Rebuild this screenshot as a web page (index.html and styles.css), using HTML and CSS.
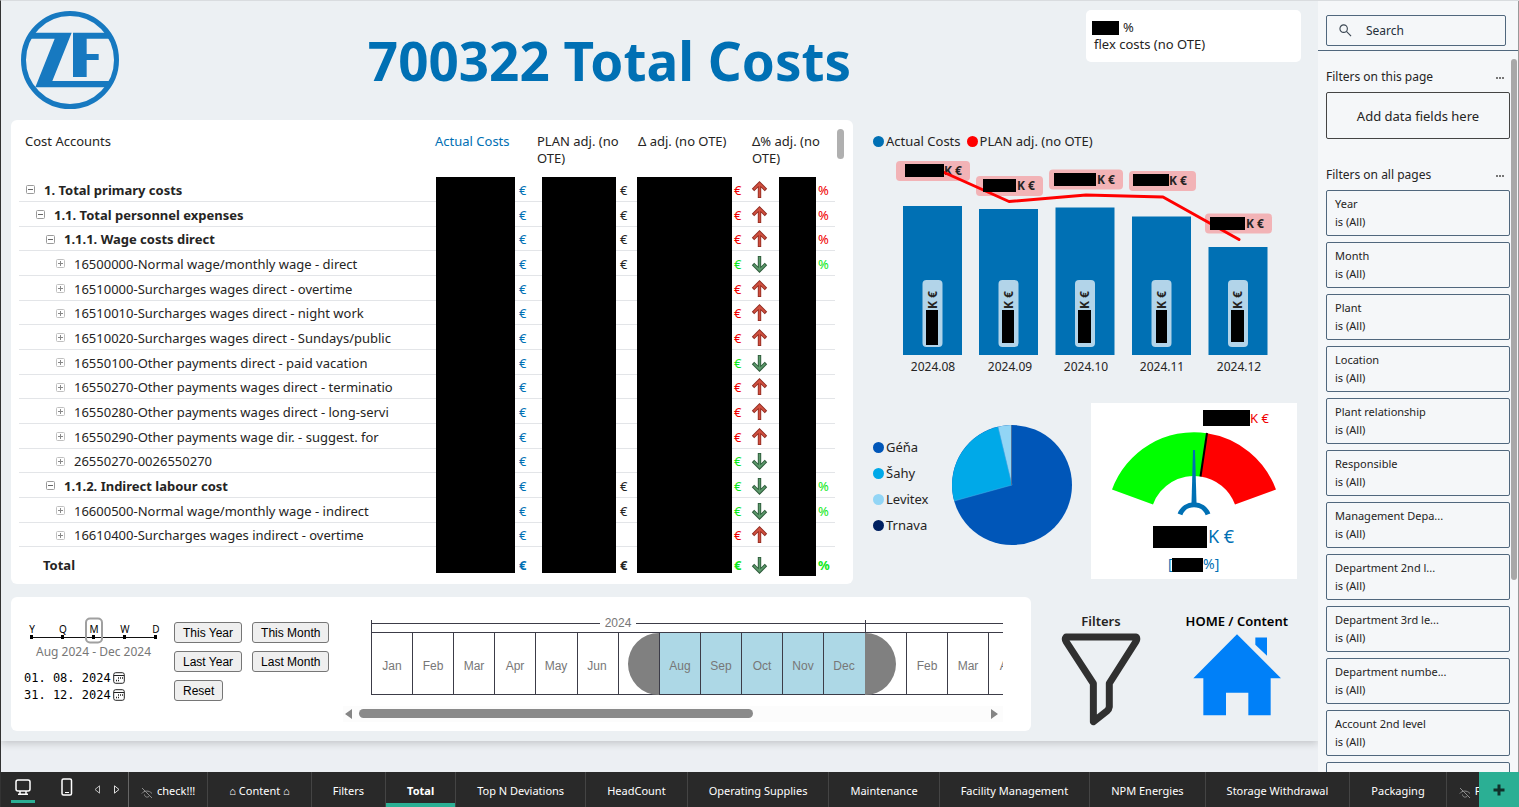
FILE: index.html
```html
<!DOCTYPE html>
<html lang="en">
<head>
<meta charset="utf-8">
<title>700322 Total Costs</title>
<link rel="stylesheet" href="styles.css">
</head>
<body>
<svg class="defs" aria-hidden="true">
  <symbol id="up" viewBox="0 0 16 18"><path d="M8 17V4M1.500 9L8 2.500L14.500 9" fill="none" stroke="#8f2a20" stroke-width="3.400"/><path d="M8 16.300V3.500M2.200 8.400L8 2.600l5.800 5.800" fill="none" stroke="#d0503f" stroke-width="1.800"/></symbol>
  <symbol id="down" viewBox="0 0 16 18"><path d="M8 1v13M1.500 9L8 15.500L14.500 9" fill="none" stroke="#2d5a3a" stroke-width="3.400"/><path d="M8 1.700V14.500M2.200 9.600L8 15.400l5.800-5.800" fill="none" stroke="#5c9a6b" stroke-width="1.600"/></symbol>
  <symbol id="minus" viewBox="0 0 9 9"><rect x="0.500" y="0.500" width="8" height="8" rx="1" fill="none" stroke="#9a9a9a"/><path d="M2 4.500h5" stroke="#666"/></symbol>
  <symbol id="plus" viewBox="0 0 9 9"><rect x="0.500" y="0.500" width="8" height="8" rx="1" fill="none" stroke="#c0c0c0"/><path d="M2 4.500h5M4.500 2v5" stroke="#888"/></symbol>
  <symbol id="cal" viewBox="0 0 12 12"><rect x="0.700" y="0.700" width="10.600" height="10.600" rx="2" fill="none" stroke="#222"/><path d="M1 3.500h10" stroke="#222"/><path d="M5 6h1M7 6h1M9 6h1M3 8.500h1M5 8.500h1" stroke="#222" stroke-width="1.300"/></symbol>
  <symbol id="hidden" viewBox="0 0 12 12"><path d="M1 1l10 10M.8 6.500C3 3.500 8 3 11 6.500M3.500 7.500c0 3 4 3.500 5 1" fill="none" stroke="#8d8d8d"/></symbol>
</svg>
<div class="app">
  <div class="workspace">
    <main class="stage">
      <div class="canvas">
        <header class="head">
          <svg class="logo" viewBox="0 0 294 294" role="img" aria-label="ZF">
            <circle cx="147" cy="147" r="139.500" fill="none" stroke="#1779c0" stroke-width="15"/>
            <path fill="#1779c0" d="M38 65H152L94 210H270L256 229H43L101 83H26ZM156 65H254L268 83H197V129H233V147H197V198H156Z"/>
          </svg>
          <h1>700322 Total Costs</h1>
          <div class="kpi">
            <div class="kpi-value"><span class="mask kpi-mask"></span>%</div>
            <div class="kpi-label">flex costs (no OTE)</div>
          </div>
        </header>

        <div class="middle">
          <section class="card table-card">
            <table class="costs">
              <colgroup><col><col class="c1"><col class="c2"><col class="c3"><col class="c4"></colgroup>
              <thead><tr><th>Cost Accounts</th><th class="blue">Actual Costs</th><th>PLAN adj. (no OTE)</th><th>Δ adj. (no OTE)</th><th>Δ% adj. (no OTE)</th></tr></thead>
              <tbody>
                <tr class="strong"><th><div class="n"><svg><use href="#minus"/></svg>1. Total primary costs</div></th><td><div class="v a"><i class="mask"></i>€</div></td><td><div class="v p"><i class="mask"></i>€</div></td><td><div class="v d red"><i class="mask"></i>€</div></td><td><div class="v r red"><svg><use href="#up"/></svg><i class="mask"></i>%</div></td></tr>
                <tr class="strong"><th><div class="n l2"><svg><use href="#minus"/></svg>1.1. Total personnel expenses</div></th><td><div class="v a"><i class="mask"></i>€</div></td><td><div class="v p"><i class="mask"></i>€</div></td><td><div class="v d red"><i class="mask"></i>€</div></td><td><div class="v r red"><svg><use href="#up"/></svg><i class="mask"></i>%</div></td></tr>
                <tr class="strong"><th><div class="n l3"><svg><use href="#minus"/></svg>1.1.1. Wage costs direct</div></th><td><div class="v a"><i class="mask"></i>€</div></td><td><div class="v p"><i class="mask"></i>€</div></td><td><div class="v d red"><i class="mask"></i>€</div></td><td><div class="v r red"><svg><use href="#up"/></svg><i class="mask"></i>%</div></td></tr>
                <tr><th><div class="n l4"><svg><use href="#plus"/></svg>16500000-Normal wage/monthly wage - direct</div></th><td><div class="v a"><i class="mask"></i>€</div></td><td><div class="v p"><i class="mask"></i>€</div></td><td><div class="v d green"><i class="mask"></i>€</div></td><td><div class="v r green"><svg><use href="#down"/></svg><i class="mask"></i>%</div></td></tr>
                <tr><th><div class="n l4"><svg><use href="#plus"/></svg>16510000-Surcharges wages direct - overtime</div></th><td><div class="v a"><i class="mask"></i>€</div></td><td><div class="v p"><i class="mask"></i></div></td><td><div class="v d red"><i class="mask"></i>€</div></td><td><div class="v r"><svg><use href="#up"/></svg><i class="mask"></i></div></td></tr>
                <tr><th><div class="n l4"><svg><use href="#plus"/></svg>16510010-Surcharges wages direct - night work</div></th><td><div class="v a"><i class="mask"></i>€</div></td><td><div class="v p"><i class="mask"></i></div></td><td><div class="v d red"><i class="mask"></i>€</div></td><td><div class="v r"><svg><use href="#up"/></svg><i class="mask"></i></div></td></tr>
                <tr><th><div class="n l4"><svg><use href="#plus"/></svg>16510020-Surcharges wages direct - Sundays/public</div></th><td><div class="v a"><i class="mask"></i>€</div></td><td><div class="v p"><i class="mask"></i></div></td><td><div class="v d red"><i class="mask"></i>€</div></td><td><div class="v r"><svg><use href="#up"/></svg><i class="mask"></i></div></td></tr>
                <tr><th><div class="n l4"><svg><use href="#plus"/></svg>16550100-Other payments direct - paid vacation</div></th><td><div class="v a"><i class="mask"></i>€</div></td><td><div class="v p"><i class="mask"></i></div></td><td><div class="v d green"><i class="mask"></i>€</div></td><td><div class="v r"><svg><use href="#down"/></svg><i class="mask"></i></div></td></tr>
                <tr><th><div class="n l4"><svg><use href="#plus"/></svg>16550270-Other payments wages direct - terminatio</div></th><td><div class="v a"><i class="mask"></i>€</div></td><td><div class="v p"><i class="mask"></i></div></td><td><div class="v d red"><i class="mask"></i>€</div></td><td><div class="v r"><svg><use href="#up"/></svg><i class="mask"></i></div></td></tr>
                <tr><th><div class="n l4"><svg><use href="#plus"/></svg>16550280-Other payments wages direct - long-servi</div></th><td><div class="v a"><i class="mask"></i>€</div></td><td><div class="v p"><i class="mask"></i></div></td><td><div class="v d red"><i class="mask"></i>€</div></td><td><div class="v r"><svg><use href="#up"/></svg><i class="mask"></i></div></td></tr>
                <tr><th><div class="n l4"><svg><use href="#plus"/></svg>16550290-Other payments wage dir. - suggest. for</div></th><td><div class="v a"><i class="mask"></i>€</div></td><td><div class="v p"><i class="mask"></i></div></td><td><div class="v d red"><i class="mask"></i>€</div></td><td><div class="v r"><svg><use href="#up"/></svg><i class="mask"></i></div></td></tr>
                <tr><th><div class="n l4"><svg><use href="#plus"/></svg>26550270-0026550270</div></th><td><div class="v a"><i class="mask"></i>€</div></td><td><div class="v p"><i class="mask"></i></div></td><td><div class="v d green"><i class="mask"></i>€</div></td><td><div class="v r"><svg><use href="#down"/></svg><i class="mask"></i></div></td></tr>
                <tr class="strong"><th><div class="n l3"><svg><use href="#minus"/></svg>1.1.2. Indirect labour cost</div></th><td><div class="v a"><i class="mask"></i>€</div></td><td><div class="v p"><i class="mask"></i>€</div></td><td><div class="v d green"><i class="mask"></i>€</div></td><td><div class="v r green"><svg><use href="#down"/></svg><i class="mask"></i>%</div></td></tr>
                <tr><th><div class="n l4"><svg><use href="#plus"/></svg>16600500-Normal wage/monthly wage - indirect</div></th><td><div class="v a"><i class="mask"></i>€</div></td><td><div class="v p"><i class="mask"></i>€</div></td><td><div class="v d green"><i class="mask"></i>€</div></td><td><div class="v r green"><svg><use href="#down"/></svg><i class="mask"></i>%</div></td></tr>
                <tr><th><div class="n l4"><svg><use href="#plus"/></svg>16610400-Surcharges wages indirect - overtime</div></th><td><div class="v a"><i class="mask"></i>€</div></td><td><div class="v p"><i class="mask"></i></div></td><td><div class="v d red"><i class="mask"></i>€</div></td><td><div class="v r"><svg><use href="#up"/></svg><i class="mask"></i></div></td></tr>
              </tbody>
              <tfoot>
                <tr><th><div class="n total">Total</div></th><td><div class="v a"><i class="mask"></i>€</div></td><td><div class="v p"><i class="mask"></i>€</div></td><td><div class="v d green"><i class="mask"></i>€</div></td><td><div class="v r green"><svg><use href="#down"/></svg><i class="mask"></i>%</div></td></tr>
              </tfoot>
            </table>
            <div class="vthumb"></div>
          </section>

          <section class="charts">
            <ul class="legend">
              <li><i class="dot blue-dot"></i>Actual Costs</li>
              <li><i class="dot red-dot"></i>PLAN adj. (no OTE)</li>
            </ul>
            <svg class="combo" viewBox="870 155 431 225" role="img" aria-label="Actual costs and plan by month">
              <g fill="#0070b4">
                <rect x="903" y="206" width="59" height="149"/><rect x="979" y="209" width="59" height="146"/><rect x="1055.500" y="207.500" width="59" height="147.500"/><rect x="1132" y="216.500" width="59" height="138.500"/><rect x="1208.500" y="247" width="59" height="108"/>
              </g>
              <g fill="#b2d4e9">
                <rect x="922.500" y="280" width="20" height="67" rx="4"/><rect x="998.500" y="280" width="20" height="67" rx="4"/><rect x="1075" y="280" width="20" height="67" rx="4"/><rect x="1151.500" y="280" width="20" height="67" rx="4"/><rect x="1228" y="280" width="20" height="67" rx="4"/>
              </g>
              <g class="val">
                <text transform="translate(937 309) rotate(-90)">K €</text><text transform="translate(1013 309) rotate(-90)">K €</text><text transform="translate(1089 309) rotate(-90)">K €</text><text transform="translate(1166 309) rotate(-90)">K €</text><text transform="translate(1242 309) rotate(-90)">K €</text>
              </g>
              <g fill="#f2b3b6">
                <rect x="896" y="161" width="74" height="20" rx="4"/><rect x="976" y="176" width="67" height="20" rx="4"/><rect x="1049" y="169.500" width="74" height="20" rx="4"/><rect x="1129" y="171" width="67" height="20" rx="4"/><rect x="1205" y="213.500" width="67" height="20" rx="4"/>
              </g>
              <g class="val">
                <text x="944" y="175">K €</text><text x="1017" y="190">K €</text><text x="1097" y="184">K €</text><text x="1169" y="185">K €</text><text x="1246" y="228">K €</text>
              </g>
              <path d="M932 167L1009 201.500L1086 195L1163 197L1239 239.500" fill="none" stroke="#ff0000" stroke-width="3" stroke-linejoin="round" stroke-linecap="round"/>
              <g fill="#000">
                <rect x="905" y="164" width="39" height="13"/><rect x="983" y="179" width="33" height="13"/><rect x="1054" y="173" width="42" height="13"/><rect x="1133" y="174" width="36" height="12"/><rect x="1210" y="217" width="35" height="13"/>
                <rect x="926" y="310" width="12" height="35"/><rect x="1002" y="310" width="12" height="33"/><rect x="1078" y="310" width="13" height="33"/><rect x="1156" y="310" width="11" height="33"/><rect x="1231" y="310" width="13" height="32"/>
              </g>
              <g class="axis">
                <text x="933" y="371">2024.08</text><text x="1010" y="371">2024.09</text><text x="1086" y="371">2024.10</text><text x="1162" y="371">2024.11</text><text x="1239" y="371">2024.12</text>
              </g>
            </svg>
            <div class="lower">
              <ul class="sites">
                <li><i class="dot s1"></i>Géňa</li>
                <li><i class="dot s2"></i>Šahy</li>
                <li><i class="dot s3"></i>Levitex</li>
                <li><i class="dot s4"></i>Trnava</li>
              </ul>
              <svg class="pie" viewBox="-61 -61 122 122" role="img" aria-label="Share by site">
                <circle r="60" fill="#0056b8"/>
                <path d="M0 0L-57.800 16A60 60 0 0 1-14 -58.300Z" fill="#00a9e8"/>
                <path d="M0 0L-14 -58.300A60 60 0 0 1-0.800 -60Z" fill="#92d5f5"/>
                <path d="M0 0L-57.800 16M0 0L-14 -58.300" stroke="#4cb0e8" stroke-width="0.500"/>
                <path d="M-0.500 0V-60" stroke="#4d6f9b" stroke-width="1"/>
              </svg>
              <div class="gauge-card">
                <svg viewBox="1091 403 206 176" role="img" aria-label="Cost gauge">
                  <path d="M1112 489.600A87.300 87.300 0 0 1 1207 433.200L1200.500 476.400A43.600 43.600 0 0 0 1153 504.500Z" fill="#00ff00"/>
                  <path d="M1276 489.600A87.300 87.300 0 0 0 1207 433.200L1200.500 476.400A43.600 43.600 0 0 1 1235 504.500Z" fill="#ff0000"/>
                  <path d="M1207 433L1200.500 476.500" stroke="#000" stroke-width="2"/>
                  <path d="M1193 450h2l1.500 53h-5z" fill="#0070b4"/>
                  <path d="M1180 514.300A15 15 0 0 1 1208 514.300" fill="none" stroke="#0070b4" stroke-width="5"/>
                  <rect x="1203" y="410" width="47" height="16"/><rect x="1153" y="526" width="54" height="22"/><rect x="1172" y="558" width="31" height="14"/>
                  <text x="1250" y="423" class="g-target">K €</text>
                  <text x="1208" y="543" class="g-main">K €</text>
                  <text x="1168" y="569" class="g-pct">[</text><text x="1203" y="569" class="g-pct">%]</text>
                </svg>
              </div>
            </div>
          </section>
        </div>

        <div class="bottom">
          <section class="card timeline">
            <div class="range">
              <svg class="gran" viewBox="24 616 140 28" role="img" aria-label="Granularity">
                <path d="M31 637.500H156" stroke="#111"/>
                <path d="M30 635h3v4h-3zM61 635h3v4h-3zM92 635h3v4h-3zM123 635h3v4h-3zM154 635h3v4h-3z"/>
                <rect x="86" y="618.500" width="16" height="24" rx="4" fill="none" stroke="#a0a0a0" stroke-width="2"/>
                <text x="32" y="633">Y</text><text x="63" y="633">Q</text><text x="94" y="633">M</text><text x="125" y="633">W</text><text x="156" y="633">D</text>
              </svg>
              <div class="range-text">Aug 2024 - Dec 2024</div>
              <label class="date"><input type="text" value="01. 08. 2024" aria-label="Start date"><svg><use href="#cal"/></svg></label>
              <label class="date"><input type="text" value="31. 12. 2024" aria-label="End date"><svg><use href="#cal"/></svg></label>
            </div>
            <div class="presets">
              <div><button>This Year</button><button>This Month</button></div>
              <div><button>Last Year</button><button>Last Month</button></div>
              <div><button>Reset</button></div>
            </div>
            <svg class="months" viewBox="343 612 660 110" role="img" aria-label="Timeline">
              <rect x="659.500" y="633" width="206" height="62" fill="#add8e6"/>
              <rect x="343" y="706" width="660" height="16" fill="#fcfcfc"/>
              <g fill="none" stroke="#3c3c48" stroke-width="1">
                <path d="M371.500 620v13M865.500 620v13M371.500 623.500H600M636 623.500H1003"/>
                <path d="M371 632.500H1003M371 694.500H1003"/>
                <path d="M371.500 633v62M412.500 633v62M453.500 633v62M494.500 633v62M535.500 633v62M577.500 633v62M618.500 633v62M659.500 633v62M700.500 633v62M741.500 633v62M782.500 633v62M823.500 633v62M865.500 633v62M906.500 633v62M947.500 633v62M988.500 633v62"/>
              </g>
              <path d="M659 633A31 31 0 0 0 659 695ZM865 633A31 31 0 0 1 865 695Z" fill="#808080"/>
              <g class="mo">
                <text x="618" y="627">2024</text>
                <text x="392" y="670">Jan</text><text x="433" y="670">Feb</text><text x="474" y="670">Mar</text><text x="515" y="670">Apr</text><text x="556" y="670">May</text><text x="597" y="670">Jun</text><text x="680" y="670">Aug</text><text x="721" y="670">Sep</text><text x="762" y="670">Oct</text><text x="803" y="670">Nov</text><text x="844" y="670">Dec</text><text x="927" y="670">Feb</text><text x="968" y="670">Mar</text><text x="1009" y="670">Apr</text>
              </g>
              <path d="M345 714l7-5v10zM998 714l-7-5v10z" fill="#858585"/>
              <rect x="359" y="709" width="394" height="9" rx="4.500" fill="#8a8a8a"/>
            </svg>
          </section>
          <div class="nav">
            <a href="#filters" class="nav-item"><span>Filters</span>
              <svg class="funnel" viewBox="61 100 240 280"><path d="M76 112H287Q291 118 286 126L206 252V322Q205 330 199 335L158 367V252L76 126Q71 118 76 112Z" fill="none" stroke="#303030" stroke-width="21" stroke-linejoin="round"/></svg>
            </a>
            <a href="#home" class="nav-item home"><span>HOME / Content</span>
              <svg class="house" viewBox="456 100 264 248"><path d="M457 235L588 103L720 235H689V346H622V279H555V346H487V235ZM643 113H678V168L643 135Z" fill="#0080f8"/></svg>
            </a>
          </div>
        </div>
      </div>
    </main>

    <aside class="pane">
      <div class="search">
        <svg viewBox="0 0 14 14"><circle cx="5" cy="5" r="4" fill="none" stroke="#3a4652" stroke-width="1.200"/><path d="M8 8l5 5" stroke="#3a4652" stroke-width="1.200"/></svg>
        <input type="text" placeholder="Search" aria-label="Search">
      </div>
      <div class="pane-body">
        <div class="group"><span>Filters on this page</span><i class="more"></i></div>
        <div class="drop">Add data fields here</div>
        <div class="group second"><span>Filters on all pages</span><i class="more"></i></div>
        <div class="filters">
          <button>Year<br>is (All)</button>
          <button>Month<br>is (All)</button>
          <button>Plant<br>is (All)</button>
          <button>Location<br>is (All)</button>
          <button>Plant relationship<br>is (All)</button>
          <button>Responsible<br>is (All)</button>
          <button>Management Depa...<br>is (All)</button>
          <button>Department 2nd l...<br>is (All)</button>
          <button>Department 3rd le...<br>is (All)</button>
          <button>Department numbe...<br>is (All)</button>
          <button>Account 2nd level<br>is (All)</button>
          <button>Account 3rd level<br>is (All)</button>
        </div>
        <div class="pane-thumb"></div>
      </div>
    </aside>
  </div>

  <nav class="tabs">
    <div class="tools">
      <button class="tool current" aria-label="Desktop layout"><svg viewBox="0 0 16 16"><rect x="1" y="1" width="14" height="11" rx="2" fill="none" stroke="#fff" stroke-width="1.500"/><path d="M5 12v2.500M11 12v2.500M3 15.200h10" stroke="#fff" stroke-width="1.500"/></svg></button>
      <button class="tool phone" aria-label="Mobile layout"><svg viewBox="0 0 12 18"><rect x="1" y="1" width="9.500" height="16" rx="1.500" fill="none" stroke="#fff" stroke-width="1.500"/><path d="M4 14.500h4" stroke="#fff"/></svg></button>
      <button class="step" aria-label="Previous page"><svg viewBox="0 0 6 9"><path d="M5.500 .8v7.400L1 4.500z" fill="none" stroke="#bbb"/></svg></button>
      <button class="step" aria-label="Next page"><svg viewBox="0 0 6 9"><path d="M.5 .8v7.400L5 4.500z" fill="none" stroke="#ddd"/></svg></button>
    </div>
    <div class="tab-list">
      <a href="#t1" class="first"><svg><use href="#hidden"/></svg>check!!!</a>
      <a href="#t2">⌂ Content ⌂</a>
      <a href="#t3">Filters</a>
      <a href="#t4" class="active">Total</a>
      <a href="#t5">Top N Deviations</a>
      <a href="#t6">HeadCount</a>
      <a href="#t7">Operating Supplies</a>
      <a href="#t8">Maintenance</a>
      <a href="#t9">Facility Management</a>
      <a href="#t10">NPM Energies</a>
      <a href="#t11">Storage Withdrawal</a>
      <a href="#t12">Packaging</a>
      <a href="#t13" class="last"><svg><use href="#hidden"/></svg>Fo</a>
    </div>
    <button class="add" aria-label="New page"><svg viewBox="0 0 12 12"><path d="M6 .5v11M.5 6h11" stroke="#10302a" stroke-width="3"/></svg></button>
  </nav>
</div>
</body>
</html>
```
FILE: styles.css
```css
* { box-sizing: border-box; }
body { margin: 0; font-family: "Noto Sans", "Open Sans", sans-serif; font-size: 13px; color: #252423; }
button, input { font: inherit; color: inherit; }
ul { list-style: none; margin: 0; padding: 0; }
a { color: inherit; text-decoration: none; }
svg { display: block; flex: none; }
.defs { position: absolute; width: 0; height: 0; }

.app { display: flex; flex-direction: column; height: 100vh; overflow: hidden; border-left: 1px solid #333; border-top: 1px solid #d9dcdf; }
.workspace { display: flex; flex: 1; min-height: 0; }
.stage { flex: 1; min-width: 0; background: #eceff3; overflow: hidden; }
.canvas { background: #ecf0f3; padding: 9px 17px 10px 10px; box-shadow: 0 2px 8px #00000030; }

.head { display: flex; align-items: flex-start; height: 110px; padding-left: 10px; }
.logo { width: 98px; height: 98px; margin-top: 1px; }
.head h1 { flex: 1; margin: 14px 0 0; padding-left: 14px; text-align: center; font-size: 53px; line-height: 74px; font-weight: 700; color: #0070b4; white-space: nowrap; }
.kpi { width: 215px; height: 52px; padding: 9px 6px; background: #fff; border-radius: 5px; line-height: 17px; }
.kpi-value { display: flex; align-items: center; gap: 4px; }
.kpi-mask { width: 27px; height: 14px; }
.kpi-label { padding-left: 2px; }
.mask { display: block; background: #000; flex: none; }

.card { background: #fff; border-radius: 6px; }
.middle { display: flex; gap: 17px; }
.table-card { display: flex; flex: 1; min-width: 0; align-items: flex-start; padding: 0 9px 0 8px; }
.costs { flex: 1; table-layout: fixed; border-spacing: 0; width: 100%; }
.c1 { width: 102px; }
.c2 { width: 101px; }
.c3 { width: 114px; }
.c4 { width: 84px; }
.costs th, .costs td { padding: 0; text-align: left; vertical-align: top; font-weight: 400; }
.costs thead th { height: 57px; padding: 13px 0 0 1px; line-height: 17px; }
.costs thead th:first-child { padding-left: 6px; }
.costs thead .blue { color: #0070b4; }
.costs tr { --row: 25px; }
.costs tbody tr:nth-child(3n) { --row: 24px; }
.costs tfoot tr { --row: 35px; }
.costs tbody th, .costs tbody td { box-shadow: inset 0 -1px #e3e5e8; }
.n, .v { display: flex; align-items: center; height: var(--row); white-space: nowrap; }
.n { gap: 9px; padding-left: 7px; overflow: hidden; }
.n svg { width: 9px; height: 9px; }
.l2 { padding-left: 17px; }
.l3 { padding-left: 27px; }
.l4 { padding-left: 37px; }
.strong .n, tfoot .n { font-weight: 700; }
.total { padding-left: 24px; }
.v .mask { height: 100%; }
.v svg { width: 17px; height: 18px; }
.v.a { gap: 4px; padding-left: 2px; color: #0070b4; }
.a .mask { width: 79px; }
.v.p { gap: 4px; padding-left: 6px; }
.p .mask { width: 74px; }
.v.d { gap: 2px; }
.d .mask { width: 95px; }
.v.r { gap: 2px; }
.r .mask { width: 37px; margin-left: 9px; }
.red { color: #f00000; }
.green { color: #10e820; }
tfoot .v { font-weight: 700; }
tfoot .mask { align-self: flex-start; }
tfoot .v .mask { height: 26px; }
tfoot .v.r .mask { height: 29px; }
.vthumb { width: 7px; height: 30px; margin: 9px 0 0 2px; border-radius: 4px; background: #b0b0b0; }

.charts { width: 431px; padding-top: 12px; }
.legend { display: flex; gap: 6px; padding-left: 3px; line-height: 18px; }
.legend li, .sites li { display: flex; align-items: center; gap: 2px; }
.dot { width: 11px; height: 11px; border-radius: 50%; }
.blue-dot { background: #0070b4; }
.red-dot { background: #ff0000; }
.combo { width: 100%; margin-top: 5px; }
.combo text { fill: #252423; }
.val { font-size: 12px; font-weight: 700; }
.axis { font-size: 12px; text-anchor: middle; }
.lower { display: flex; padding: 23px 4px 5px 3px; }
.sites { flex: 1; padding-top: 31px; line-height: 26px; }
.s1 { background: #0056b8; }
.s2 { background: #00a9e8; }
.s3 { background: #92d5f5; }
.s4 { background: #002060; }
.pie { width: 122px; height: 122px; margin: 21px 18px 0 0; }
.gauge-card { width: 206px; background: #fff; }
.g-target { font-size: 13px; fill: #f00000; }
.g-main { font-size: 18px; fill: #0070b4; }
.g-pct { font-size: 14px; fill: #0070b4; }

.bottom { display: flex; margin-top: 13px; }
.timeline { display: flex; flex: 1; min-width: 0; height: 134px; padding: 0 28px 0 13px; }
.range { width: 140px; padding-top: 19px; }
.gran { width: 140px; height: 28px; }
.gran text { font-size: 10px; text-anchor: middle; }
.range-text { padding-left: 12px; font-size: 12px; line-height: 16px; color: #777; white-space: nowrap; }
.date { display: flex; align-items: center; gap: 2px; height: 17px; }
.range-text + .date { margin-top: 9px; }
.date input { width: 87px; padding: 0; border: 0; background: none; font: 12px "DejaVu Sans Mono", monospace; color: #000; }
.date svg { width: 12px; height: 12px; }
.presets { width: 179px; padding: 25px 0 0 10px; }
.presets div { display: flex; gap: 10px; margin-bottom: 8px; }
.presets button { height: 21px; padding: 0 8px; border: 1px solid #767676; border-radius: 3px; background: #efefef; font: 12px "Liberation Sans", sans-serif; color: #000; }
.months { flex: 1; min-width: 0; height: 110px; margin-top: 15px; }
.mo { font: 12px "Liberation Sans", sans-serif; fill: #777; text-anchor: middle; }
.nav { display: flex; width: 270px; padding: 16px 13px 0 30px; justify-content: space-between; }
.nav-item { display: flex; flex-direction: column; align-items: center; gap: 3px; line-height: 17px; font-weight: 600; }
.home { color: #000; }
.funnel { width: 80px; height: 93px; }
.house { width: 88px; height: 83px; }

.pane { display: flex; flex-direction: column; width: 201px; background: #f5f7f9; border-right: 1px solid #999; font-size: 12px; }
.search { display: flex; align-items: center; gap: 14px; height: 31px; margin: 14px 12px 4px 8px; padding-left: 12px; border: 1px solid #50677d; border-radius: 2px; }
.search svg { width: 13px; height: 13px; }
.search input { width: 120px; padding: 0; border: 0; background: none; outline: 0; }
.search input::placeholder { color: #252f3a; opacity: 1; }
.pane-body { position: relative; flex: 1; min-height: 0; padding: 16px 8px 0; border-top: 1px solid #50677d; overflow: hidden; }
.group { display: flex; justify-content: space-between; align-items: center; height: 18px; padding-right: 6px; }
.more { width: 8px; height: 2px; margin-top: 3px; background: repeating-linear-gradient(90deg, #777 0 2px, transparent 2px 3px); }
.drop { display: flex; align-items: center; justify-content: center; height: 47px; margin-top: 7px; border: 1px solid #444; border-radius: 2px; font-size: 13px; }
.second { margin-top: 26px; }
.filters { display: flex; flex-direction: column; gap: 6px; margin-top: 7px; }
.filters button { height: 46px; padding: 0 8px; border: 1px solid #50677d; border-radius: 2px; background: none; text-align: left; font-size: 11px; line-height: 18px; flex: none; }
.pane-body > * { width: 184px; }
.pane-body > .pane-thumb { position: absolute; top: 8px; right: 1px; width: 6px; height: 521px; border-radius: 3px; background: #a8a8a8; }

.tabs { display: flex; height: 35px; background: #292929; color: #fff; font-size: 11px; flex: none; }
.tabs button { border: 0; padding: 0; background: none; }
.tools { display: flex; width: 128px; padding-left: 10px; border-right: 1px solid #666; flex: none; }
.tools .tool { display: flex; flex: none; width: 24px; padding-top: 7px; justify-content: center; align-items: flex-start; }
.tool svg { width: 16px; height: 16px; }
.tools .current { height: 31px; border-bottom: 3px solid #2baf94; }
.tools .phone { margin: 0 8px 0 20px; padding-top: 6px; }
.phone svg { width: 12px; height: 18px; }
.step { display: flex; flex: none; width: 20px; align-items: center; justify-content: center; }
.step svg { width: 6px; height: 9px; }
.tab-list { display: flex; flex: 1; min-width: 0; overflow: hidden; }
.tab-list a { display: flex; flex: none; align-items: center; padding: 2px 21px 0; border-right: 1px solid #444; white-space: nowrap; }
.tab-list .first, .tab-list .last { gap: 4px; padding-left: 12px; padding-right: 12px; }
.tab-list svg { width: 12px; height: 12px; margin-top: 4px; }
.tab-list .active { font-weight: 700; box-shadow: inset 0 -4px #2baf94; }
.add { display: flex; width: 40px; align-items: center; justify-content: center; }
.tabs .add { background: #2baf94; }
.add svg { width: 12px; height: 12px; }
```
